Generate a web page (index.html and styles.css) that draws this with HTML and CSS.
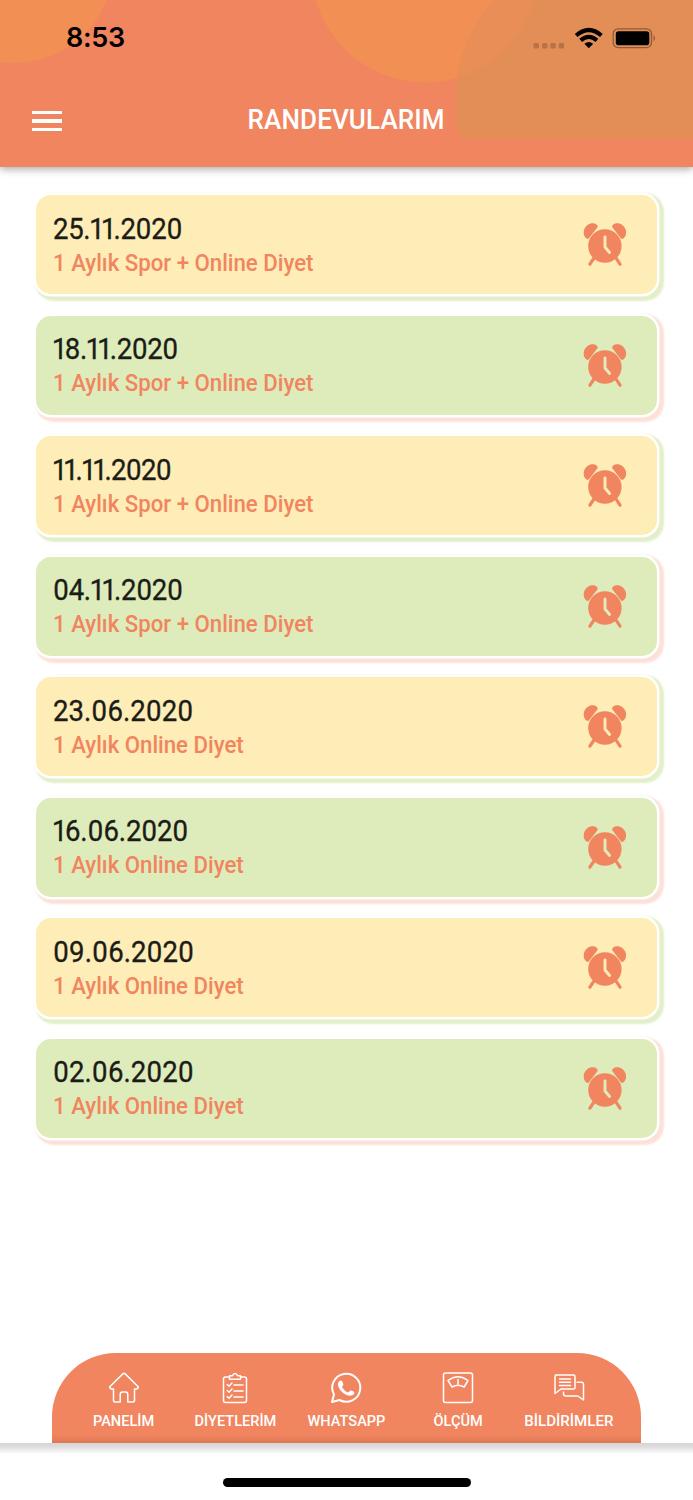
FILE: index.html
```html
<!DOCTYPE html>
<html lang="tr">
<head>
<meta charset="utf-8">
<title>Randevularım</title>
<link rel="stylesheet" href="styles.css">
</head>
<body>
<svg class="defs" width="0" height="0" aria-hidden="true">
  <symbol id="alarm" viewBox="0 0 48 48">
    <g fill="#f0855f">
      <path d="M6.200 18.800C3 17.500 2 13 3.200 9.500C5 4 11.500 1.200 15.800 4.700Q17.600 6.300 16.300 7.600L8 18.200Q7.200 19.200 6.200 18.800Z"/>
      <path d="M41.600 18.800C44.800 17.500 45.800 13 44.600 9.500C42.800 4 36.300 1.200 32 4.700Q30.200 6.300 31.500 7.600L39.800 18.200Q40.600 19.200 41.600 18.800Z"/>
      <circle cx="23.900" cy="26" r="16.700"/>
    </g>
    <path d="M13 38L8.900 44.200M35 38L39 44.200" stroke="#f0855f" stroke-width="3.200" stroke-linecap="round"/>
    <path d="M24 17V27L28.600 32.500" fill="none" stroke="currentColor" stroke-width="2.900" stroke-linecap="round" stroke-linejoin="round"/>
  </symbol>
</svg>
<header class="header">
  <svg class="header-art" viewBox="0 0 693 167" width="693" height="167">
    <circle cx="15" cy="-35" r="98" fill="#f28f55"/>
    <circle cx="425" cy="-31" r="113.500" fill="#f28f55"/>
    <path d="M460 139A151 151 0 0 1 494 0H693V139Z" fill="#e28e56"/>
    <path d="M494 0H534A113.500 113.500 0 0 1 457 78A151 151 0 0 1 494 0Z" fill="#e98e56"/>
  </svg>
  <div class="status">
    <span class="time">8:53</span>
    <svg class="indicators" viewBox="0 0 126 24" width="126" height="24">
      <g fill="#b77248"><rect x="1.500" y="16" width="5.500" height="5.500" rx="1.500"/><rect x="10" y="16" width="5.500" height="5.500" rx="1.500"/><rect x="18.300" y="16" width="5.500" height="5.500" rx="1.500"/><rect x="26.600" y="16" width="5.500" height="5.500" rx="1.500"/></g>
      <g fill="none" stroke="#000" stroke-width="4.200"><path d="M44.200 8.500Q56.800-2.500 69.400 8.500"/><path d="M48.700 13.400Q56.800 6.300 64.900 13.400"/></g>
      <path d="M52.400 16.800Q56.800 13 61.200 16.800L56.800 21.200Z"/>
      <rect x="81.200" y="1.800" width="38.300" height="18.800" rx="5" fill="none" stroke="#8f5b38" stroke-width="1.300"/>
      <rect x="83.800" y="4.200" width="33.500" height="14" rx="2.800"/>
      <path d="M121.500 8Q124.500 11 121.500 14.500Z" fill="#8f5b38"/>
    </svg>
  </div>
  <div class="titlebar">
    <div class="menu"><i></i><i></i><i></i></div>
    <h1>RANDEVULARIM</h1>
  </div>
</header>
<main class="list">
  <article class="card yellow"><div><p class="date ones-two">25.11.2020</p><p class="plan">1 Aylık Spor + Online Diyet</p></div><svg class="alarm"><use href="#alarm"/></svg></article>
  <article class="card green"><div><p class="date ones-three">18.11.2020</p><p class="plan">1 Aylık Spor + Online Diyet</p></div><svg class="alarm"><use href="#alarm"/></svg></article>
  <article class="card yellow"><div><p class="date ones-four">11.11.2020</p><p class="plan">1 Aylık Spor + Online Diyet</p></div><svg class="alarm"><use href="#alarm"/></svg></article>
  <article class="card green"><div><p class="date ones-two">04.11.2020</p><p class="plan">1 Aylık Spor + Online Diyet</p></div><svg class="alarm"><use href="#alarm"/></svg></article>
  <article class="card yellow"><div><p class="date">23.06.2020</p><p class="plan">1 Aylık Online Diyet</p></div><svg class="alarm"><use href="#alarm"/></svg></article>
  <article class="card green"><div><p class="date ones-one">16.06.2020</p><p class="plan">1 Aylık Online Diyet</p></div><svg class="alarm"><use href="#alarm"/></svg></article>
  <article class="card yellow"><div><p class="date">09.06.2020</p><p class="plan">1 Aylık Online Diyet</p></div><svg class="alarm"><use href="#alarm"/></svg></article>
  <article class="card green"><div><p class="date">02.06.2020</p><p class="plan">1 Aylık Online Diyet</p></div><svg class="alarm"><use href="#alarm"/></svg></article>
</main>
<nav class="tabs">
  <a class="tab"><svg viewBox="0 0 32 32"><path d="M5.500 17H3.500Q.8 16.200 2.300 14.300L14.800 1.900Q16 .9 17.200 1.900L29.700 14.300Q31.200 16.200 28.500 17H26.500V28.500Q26.500 30 25 30H19.800V22.500Q19.800 20 17.500 20H14.500Q12.200 20 12.200 22.500V30H7Q5.500 30 5.500 28.500Z"/></svg><span>PANELİM</span></a>
  <a class="tab"><svg viewBox="0 0 32 32"><path d="M10.500 5H6.500Q4.500 5 4.500 7V28.500Q4.500 30.500 6.500 30.500H25.500Q27.500 30.500 27.500 28.500V7Q27.500 5 25.500 5H21.500M10.500 7.300V3.800H13.200Q16 -1 18.800 3.800H21.500V7.300ZM8.200 12.500L10 14.200L13 11M15 13H24M8.200 18.500L10 20.200L13 17M15 19H24M8.200 24.500L10 26.200L13 23M15 25H24"/></svg><span>DİYETLERİM</span></a>
  <a class="tab"><svg viewBox="0 0 32 32"><path stroke-width="2" d="M2 30L4 22.500A14 14 0 1 1 9.500 28Z"/><path class="solid" d="M10.300 8.500Q11.500 8.200 12.300 9.500L13.400 12.300Q13.500 13 12 14.700C13.500 17.800 15.500 19.500 18.500 20.500L20.300 18.500Q21 18 24 19.800C25 20.500 24 22.500 22.500 23.300C19.500 24.700 14.500 22.700 11 18.900C7 14.500 7.200 9.900 10.300 8.500Z"/></svg><span>WHATSAPP</span></a>
  <a class="tab"><svg viewBox="0 0 32 32"><rect x="1.500" y="1" width="29" height="29.500" rx="2"/><path d="M6 8.500Q16 1 26 8.500L22.200 15Q16 11.500 10 15ZM16 7.500V12.200"/></svg><span>ÖLÇÜM</span></a>
  <a class="tab"><svg viewBox="0 0 32 32"><path d="M2.500 3H20.500Q22 3 22 4.500V15.500Q22 17 20.500 17H8L2 21.500V4.500Q2 3 3.500 3M6.500 7H17.500M6.500 10.200H17.500M6.500 13.400H17.500M24 10.200H28.500Q30.500 10.200 30.500 12V28L24.800 24H13Q10.500 24 10.500 22V20"/></svg><span class="wide">BİLDİRİMLER</span></a>
</nav>
<footer class="bottom"><div class="home-bar"></div></footer>
</body>
</html>
```
FILE: styles.css
```css
* { box-sizing: border-box; margin: 0; padding: 0; }
body { width: 693px; height: 1500px; background: #fff; font-family: Roboto, "Liberation Sans", sans-serif; display: flex; flex-direction: column; overflow: hidden; }
.defs { position: absolute; }
.header { position: relative; height: 167px; flex: none; background: #f0855f; box-shadow: 0 2px 8px rgba(0,0,0,.35); }
.header-art { position: absolute; inset: 0; }
.status { position: relative; display: flex; justify-content: space-between; padding: 22px 35px 0 66px; height: 80px; }
.time { font: 600 27px/32px Inter, sans-serif; letter-spacing: -.3px; }
.indicators { margin-top: 5px; }
.titlebar { position: relative; height: 80px; display: grid; place-items: center; }
.titlebar h1 { grid-area: 1 / 1; color: #fff; font-weight: 500; font-size: 27px; letter-spacing: .1px; transform: scaleX(.965); }
.menu { grid-area: 1 / 1; justify-self: start; margin: 2px 0 0 32px; width: 30px; display: grid; gap: 5px; }
.menu i { height: 3.500px; background: #fff; }
.list { flex: 1; padding: 28px 36px; display: flex; flex-direction: column; gap: 21.500px; }
.card { flex: none; width: 621px; height: 99px; border-radius: 15px; padding: 14.500px 28px 0 17px; display: flex; justify-content: space-between; }
.yellow { background: #feedb7; color: #feedb7; box-shadow: 0 0 0 2.500px #fff, 3px 2.500px 2px 4px #e3efc8; }
.green { background: #deecbb; color: #deecbb; box-shadow: 0 0 0 2.500px #fff, 3px 2.500px 2px 4px #fde1d8; }
.date { color: #1c1c17; font-size: 30px; line-height: 38px; white-space: nowrap; font-variant-numeric: proportional-nums; -webkit-text-stroke: .35px #1c1c17; transform: scaleX(.918); transform-origin: left; }
.ones-one { letter-spacing: -.2px; }
.ones-two { letter-spacing: -.35px; }
.ones-three { letter-spacing: -.5px; }
.ones-four { letter-spacing: -.8px; }
.plan { color: #f0855f; font-size: 23.500px; line-height: 30px; font-weight: 500; white-space: nowrap; transform: scaleX(.945); transform-origin: left; }
.alarm { width: 48px; height: 48px; margin-top: 10.500px; }
.tabs { width: 589px; height: 90px; margin-left: 52px; flex: none; background: linear-gradient(#f0855f 82px, #dc7855); border-radius: 64px 64px 0 0; padding: 19px 16px 0; display: grid; grid-template-columns: repeat(5, 1fr); }
.tab { display: flex; flex-direction: column; align-items: center; gap: 8px; color: #fff; font-size: 15.500px; font-weight: 500; line-height: 19px; }
.tab svg { width: 32px; height: 32px; fill: none; stroke: #fff; stroke-width: 1.500; stroke-linejoin: round; stroke-linecap: round; }
.tab span { transform: scaleX(.94); }
.tab .wide { transform: scaleX(.975); }
.tab .solid { fill: #fff; stroke: none; }
.bottom { height: 57px; flex: none; background: linear-gradient(#d5d5d5 0, #dedede 4px, #fff 11px); padding-top: 35px; }
.home-bar { width: 248px; height: 9px; border-radius: 5px; background: #000; margin: 0 auto; }
```
